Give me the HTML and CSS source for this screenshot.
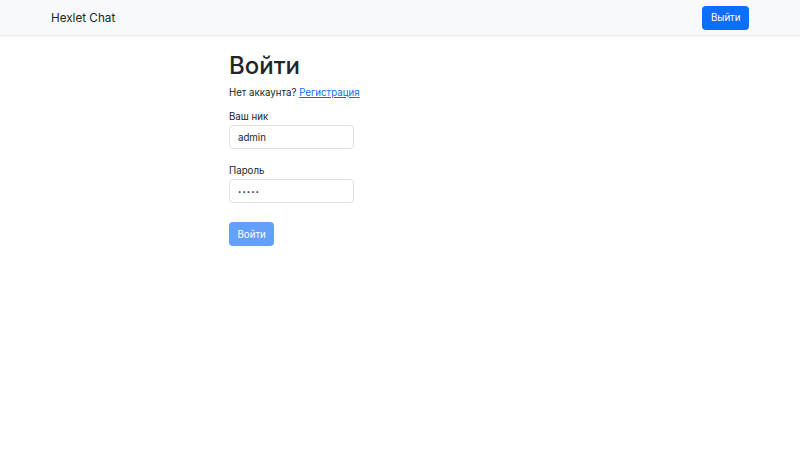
FILE: index.html
```html
<!DOCTYPE html>
<html lang="ru">
<head>
<meta charset="utf-8">
<title>Hexlet Chat</title>
<link rel="stylesheet" href="styles.css">
</head>
<body>
<nav class="navbar">
  <div class="nav-inner">
    <a class="brand" href="#">Hexlet Chat</a>
    <button class="btn btn-primary">Выйти</button>
  </div>
</nav>
<main class="container">
  <div class="form-col">
    <h1 class="title">Войти</h1>
    <p class="signup">Нет аккаунта? <a href="#">Регистрация</a></p>
    <form class="form">
      <div class="field">
        <label class="label" for="nick">Ваш ник</label>
        <input class="input" id="nick" type="text" value="admin">
      </div>
      <div class="field">
        <label class="label" for="pass">Пароль</label>
        <input class="input input-pass" id="pass" type="password" value="admin">
      </div>
      <button class="btn btn-primary btn-disabled" type="button">Войти</button>
    </form>
  </div>
</main>
</body>
</html>
```
FILE: styles.css
```css
* { box-sizing: border-box; }
html, body { margin: 0; padding: 0; }
body {
  font-family: Inter, "Noto Sans", sans-serif;
  font-size: 9.7px;
  color: #212529;
  background: #fff;
}
.navbar {
  height: 36px;
  background: #f8f9fa;
  border-bottom: 1px solid #e9ecef;
  box-shadow: 0 1px 2px rgba(0,0,0,0.04);
}
.nav-inner {
  height: 100%;
  display: flex;
  align-items: center;
  justify-content: space-between;
  padding: 0 51px;
}
.brand {
  font-size: 11.7px;
  color: #212529;
  text-decoration: none;
}
.btn {
  font-family: inherit;
  font-size: 9.7px;
  border: none;
  border-radius: 4px;
  height: 24px;
  padding: 0 8.5px;
  color: #fff;
  cursor: pointer;
}
.btn-primary { background: #0d6efd; }
.btn-disabled { background: #62a0fd; margin-top: 4px; }
.container {
  display: flex;
  padding-left: 229px;
}
.form-col { width: 125px; }
.title {
  font-size: 24px;
  font-weight: 500;
  margin: 15px 0 0;
  line-height: 30px;
  white-space: nowrap;
}
.signup {
  margin: 5px 0 0;
  line-height: 14px;
  white-space: nowrap;
}
.signup a { color: #0d6efd; }
.form {
  display: flex;
  flex-direction: column;
  align-items: flex-start;
  margin-top: 10px;
  gap: 15px;
}
.field {
  display: flex;
  flex-direction: column;
  gap: 1px;
  width: 100%;
}
.label { line-height: 14px; }
.input {
  font-family: inherit;
  font-size: 9.7px;
  color: #212529;
  width: 100%;
  height: 24px;
  padding: 0 8px;
  border: 1px solid #dee2e6;
  border-radius: 4px;
  outline: none;
}
.input-pass {
  font-size: 6px;
  letter-spacing: 1px;
}
```
